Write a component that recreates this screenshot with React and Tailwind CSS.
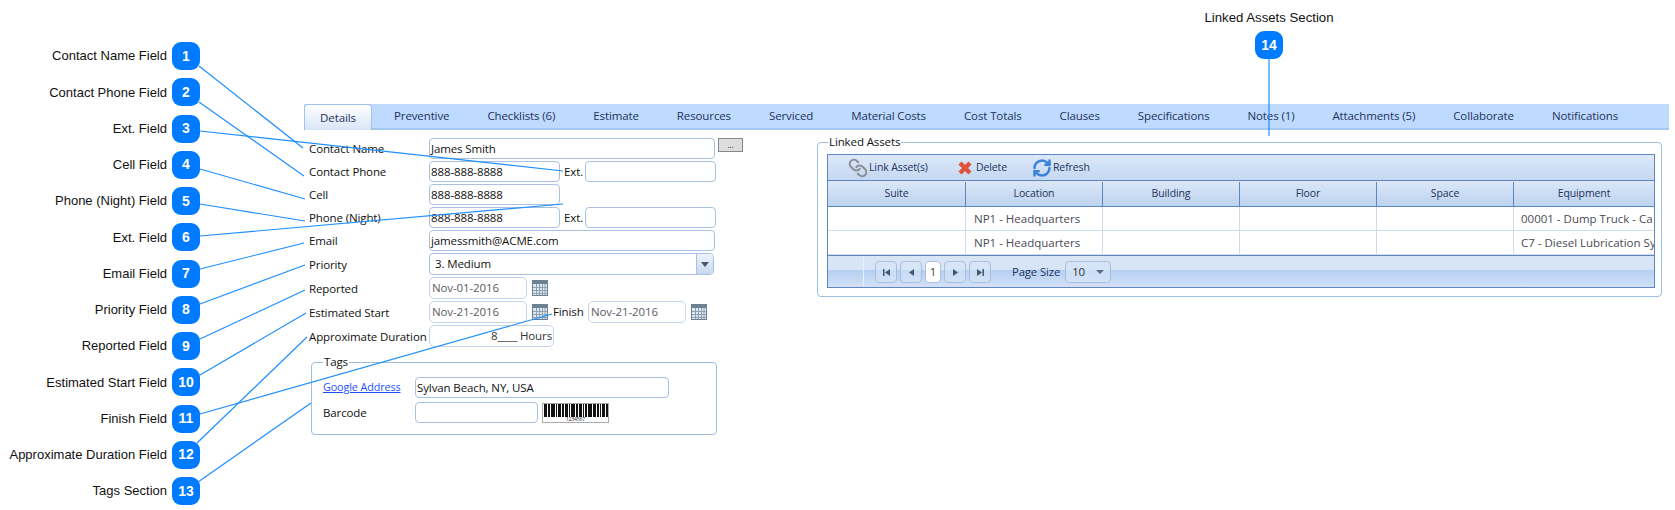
import { Link, RefreshCw } from "lucide-react";

const callouts = [
  "Contact Name Field",
  "Contact Phone Field",
  "Ext. Field",
  "Cell Field",
  "Phone (Night) Field",
  "Ext. Field",
  "Email Field",
  "Priority Field",
  "Reported Field",
  "Estimated Start Field",
  "Finish Field",
  "Approximate Duration Field",
  "Tags Section",
];

// leader lines, from the badge to the thing it points at
const lines = [
  [199, 66, 303, 148],
  [199, 102, 304, 176],
  [200, 131, 563, 171],
  [200, 169, 305, 199],
  [200, 204, 305, 221],
  [200, 236, 563, 204],
  [200, 269, 304, 243],
  [200, 304, 305, 265],
  [200, 339, 305, 290],
  [200, 375, 306, 313],
  [200, 414, 552, 314],
  [197, 443, 307, 337],
  [198, 482, 311, 403],
  [1269, 59, 1269, 136],
];

const tabs = [
  "Preventive",
  "Checklists (6)",
  "Estimate",
  "Resources",
  "Serviced",
  "Material Costs",
  "Cost Totals",
  "Clauses",
  "Specifications",
  "Notes (1)",
  "Attachments (5)",
  "Collaborate",
  "Notifications",
];

const columns = ["Suite", "Location", "Building", "Floor", "Space", "Equipment"];

const rows = ["00001 - Dump Truck - Ca", "C7 - Diesel Lubrication Sy"];

// bar, gap, bar, gap...
const bars = [3, 1, 2, 1, 4, 1, 1, 1, 3, 1, 2, 1, 3, 1, 1, 1, 4, 1, 2, 1, 3, 1, 1, 1, 2, 1, 4, 1, 3, 1, 2, 1, 1, 1, 3, 1, 2];

function Badge({ n }) {
  return (
    <div className="w-[28px] h-[28px] shrink-0 rounded-[9px] bg-[#007bff] flex items-center justify-center text-white text-[14px] font-bold font-['Liberation_Sans',sans-serif]">
      {n}
    </div>
  );
}

function Input({ className, children }) {
  return (
    <div className={`h-[21px] border border-[#a9c0e0] rounded-[4px] bg-white pl-[1px] pt-[1px] flex items-center text-[#111] whitespace-nowrap overflow-hidden ${className}`}>
      {children}
    </div>
  );
}

function Row({ label, children }) {
  return (
    <div className="flex items-center">
      <div className="w-[120px] shrink-0 pt-[1px] text-[#111] whitespace-nowrap">{label}</div>
      {children}
    </div>
  );
}

function CalendarIcon() {
  return (
    <svg width="16" height="16" viewBox="0 0 16 16" className="shrink-0">
      <rect x="0.5" y="0.5" width="15" height="15" fill="#dfe6ee" stroke="#6d8195" />
      <rect x="1" y="1" width="14" height="3" fill="#6d8195" />
      <path d="M1 7.5h14M1 10.5h14M1 13.5h14M4.5 4v11M7.5 4v11M10.5 4v11M13 4v11" stroke="#8ea1b3" strokeWidth="1" />
    </svg>
  );
}

function DateInput({ value }) {
  return (
    <div className="w-[98px] h-[22px] shrink-0 border border-[#c3d4ea] rounded-[5px] bg-white px-[2px] flex items-center text-[#5b5b66] whitespace-nowrap">
      {value}
    </div>
  );
}

function PagerButton({ d, bar }) {
  return (
    <div className="w-[22px] h-[22px] border border-[#a9bfdc] rounded-[4px] bg-[#d6e4f6]/60 flex items-center justify-center">
      <svg width="9" height="9" viewBox="0 0 9 9">
        {bar === "left" && <rect x="1" y="1" width="1.5" height="7" fill="#44566c" />}
        {bar === "right" && <rect x="6.5" y="1" width="1.5" height="7" fill="#44566c" />}
        <path d={d} fill="#44566c" />
      </svg>
    </div>
  );
}

export default function App() {
  return (
    <div className="relative w-[1675px] h-[510px] flex bg-white overflow-hidden font-['Open_Sans',sans-serif] text-[11.5px] tracking-[-0.01em]">
      {/* Left callouts */}
      <div className="w-[200px] shrink-0 pt-[42px] flex flex-col items-end gap-[8.25px] tracking-normal">
        {callouts.map((c, i) => (
          <div key={i} className="flex items-center gap-[5px]">
            <span className="text-[13px] text-[#111] whitespace-nowrap font-['Liberation_Sans',sans-serif]">{c}</span>
            <Badge n={i + 1} />
          </div>
        ))}
      </div>

      <div className="ml-[104px] w-[1365px]">
        {/* Top callout */}
        <div className="h-[104px] pt-[10px] pr-[320px] flex flex-col items-end tracking-normal">
          <div className="w-[160px] flex flex-col items-center gap-[5px]">
            <span className="text-[13.2px] leading-[16px] text-[#111] whitespace-nowrap font-['Liberation_Sans',sans-serif]">Linked Assets Section</span>
            <Badge n={14} />
          </div>
        </div>

        {/* Tabs */}
        <div className="h-[26px] bg-[#bfdaff] border-b-2 border-[#a5c8ee] flex items-stretch text-[#23335c]">
          <div className="w-[68px] h-[26px] shrink-0 border border-[#a5c3ea] border-b-0 rounded-t-[4px] bg-gradient-to-b from-white to-[#d8e5f7] flex items-center justify-center">
            Details
          </div>
          <div className="flex pl-[3px]">
            {tabs.map((t) => (
              <div key={t} className="px-[19px] flex items-center whitespace-nowrap">
                {t}
              </div>
            ))}
          </div>
        </div>

        <div className="flex">
          {/* Details form */}
          <div className="w-[513px] shrink-0 pl-[5px] pt-[8px] flex flex-col gap-[2px]">
            <Row label="Contact Name">
              <Input className="w-[286px]">James Smith</Input>
              <button className="ml-[3px] self-start w-[25px] h-[14px] border border-[#888] bg-[#ddd] text-[9px] leading-[8px] text-[#333]">...</button>
            </Row>
            <Row label="Contact Phone">
              <Input className="w-[131px]">888-888-8888</Input>
              <span className="w-[25px] pl-[4px] text-[#111]">Ext.</span>
              <Input className="w-[131px]" />
            </Row>
            <Row label="Cell">
              <Input className="w-[131px]">888-888-8888</Input>
            </Row>
            <Row label="Phone (Night)">
              <Input className="w-[131px]">888-888-8888</Input>
              <span className="w-[25px] pl-[4px] text-[#111]">Ext.</span>
              <Input className="w-[131px]" />
            </Row>
            <Row label="Email">
              <Input className="w-[286px]">jamessmith@ACME.com</Input>
            </Row>
            <Row label="Priority">
              <div className="w-[285px] h-[22px] border border-[#a9c0e0] rounded-[4px] bg-white flex items-center justify-between overflow-hidden text-[#111]">
                <span className="pl-[5px]">3. Medium</span>
                <div className="w-[17px] h-full border-l border-[#a9c0e0] bg-gradient-to-b from-[#eef3fb] to-[#c7d8ef] flex items-center justify-center">
                  <svg width="8" height="5" viewBox="0 0 8 5"><path d="M0 0h8L4 5z" fill="#44566c" /></svg>
                </div>
              </div>
            </Row>
            <Row label="Reported">
              <DateInput value="Nov-01-2016" />
              <div className="ml-[5px]"><CalendarIcon /></div>
            </Row>
            <Row label="Estimated Start">
              <DateInput value="Nov-21-2016" />
              <div className="ml-[5px]"><CalendarIcon /></div>
              <span className="ml-[5px] w-[35px] text-[#111]">Finish</span>
              <DateInput value="Nov-21-2016" />
              <div className="ml-[5px]"><CalendarIcon /></div>
            </Row>
            <Row label="Approximate Duration">
              <div className="w-[125px] h-[22px] border border-[#c3d4ea] rounded-[5px] bg-white flex items-center justify-end pr-[1px] text-[#333] whitespace-nowrap">
                8____ Hours
              </div>
            </Row>

            {/* Tags */}
            <fieldset className="mt-[5px] ml-[2px] w-[406px] border border-[#9dbfe0] rounded-[4px] pl-[11px] pt-[7px] pb-[11px]">
              <legend className="px-[1px] text-[#111] leading-[16px]">Tags</legend>
              <div className="flex items-center">
                <a className="w-[92px] text-[10.8px] text-[#1a4fff] underline whitespace-nowrap">Google Address</a>
                <Input className="w-[254px]">Sylvan Beach, NY, USA</Input>
              </div>
              <div className="mt-[4px] flex items-center">
                <span className="w-[92px] text-[#111]">Barcode</span>
                <Input className="w-[123px]" />
                <div className="ml-[4px] w-[67px] h-[20px] border border-[#aaa] bg-white flex flex-col items-center overflow-hidden">
                  <svg width="64" height="13" viewBox="0 0 64 13" className="shrink-0">
                    {bars.map((b, i) => {
                      const x = bars.slice(0, i).reduce((s, v) => s + v, 0);
                      return i % 2 === 0 ? <rect key={i} x={x} y="0" width={b} height="13" fill="#111" /> : null;
                    })}
                  </svg>
                  <span className="text-[5px] leading-[5px] text-[#222]">1234567</span>
                </div>
              </div>
            </fieldset>
          </div>

          {/* Linked assets */}
          <fieldset className="mt-[4px] w-[845px] h-[163px] border border-[#9dbfe0] rounded-[4px] pl-[9px] pr-[6px] pt-[4px]">
            <legend className="ml-[1px] px-[1px] text-[#111] leading-[16px]">Linked Assets</legend>
            <div className="h-[134px] border border-[#5e88bd] overflow-hidden text-[10.5px]">
              <div className="h-[26px] border-b border-[#5e88bd] bg-gradient-to-b from-[#dce8f8] to-[#c4d8f1] flex items-center pl-[20px] text-[#23335c]">
                <Link size={20} strokeWidth={2.5} className="text-[#8a8f96] -scale-x-100" />
                <span className="ml-[1px] w-[88px]">Link Asset(s)</span>
                <svg width="16" height="16" viewBox="0 0 16 16">
                  <path d="M3 3l10 10M13 3L3 13" stroke="#e0533d" strokeWidth="4.5" />
                </svg>
                <span className="ml-[3px] w-[58px]">Delete</span>
                <RefreshCw size={20} strokeWidth={3} className="-ml-[2px] text-[#3a82dc]" />
                <span className="ml-[1px]">Refresh</span>
              </div>

              <div className="h-[26px] pt-[1px] border-b border-[#5e88bd] bg-gradient-to-b from-[#dbe7f7] to-[#bdd3ef] grid grid-cols-[138px_137px_137px_137px_137px_1fr] text-[#23335c]">
                {columns.map((c, i) => (
                  <div key={c} className={`flex items-center justify-center ${i < 5 ? "border-r border-[#5e88bd]" : ""}`}>
                    {c}
                  </div>
                ))}
              </div>

              {rows.map((r) => (
                <div key={r} className="h-[24px] border-b border-[#cfdbea] last:border-b-0 grid grid-cols-[138px_137px_137px_137px_137px_1fr] text-[11.5px] text-[#4a4a55] tracking-normal">
                  <div className="border-r border-[#cfdbea]" />
                  <div className="border-r border-[#cfdbea] pl-[8px] pt-[1px] flex items-center whitespace-nowrap">NP1 - Headquarters</div>
                  <div className="border-r border-[#cfdbea]" />
                  <div className="border-r border-[#cfdbea]" />
                  <div className="border-r border-[#cfdbea]" />
                  <div className="pl-[7px] pt-[1px] flex items-center whitespace-nowrap overflow-hidden">{r}</div>
                </div>
              ))}

              {/* Pager */}
              <div className="h-[33px] border-t border-[#5e88bd] bg-[linear-gradient(#d7e5f7_0%,#d7e5f7_45%,#b5cff3_45%,#d4e2f6_100%)] flex items-center text-[#23335c]">
                <div className="w-[36px] h-full border-r border-[#e8f0fa]" />
                <div className="ml-[11px] flex items-center gap-[3px]">
                  <PagerButton d="M8 1v7L3 4.5z" bar="left" />
                  <PagerButton d="M7 1v7L2 4.5z" />
                  <div className="w-[16px] h-[22px] border border-[#a9bfdc] rounded-[4px] bg-white flex items-center justify-center text-[#444] text-[11.5px]">1</div>
                  <PagerButton d="M2 1v7l5-3.5z" />
                  <PagerButton d="M1 1v7l5-3.5z" bar="right" />
                </div>
                <span className="ml-[21px] text-[11.3px] whitespace-nowrap">Page Size</span>
                <div className="ml-[5px] w-[46px] h-[22px] border border-[#a9bfdc] rounded-[4px] bg-[#d6e4f6]/70 flex items-center justify-between px-[6px] text-[#333] text-[11.5px]">
                  <span>10</span>
                  <svg width="8" height="4" viewBox="0 0 8 4"><path d="M0 0h8L4 4z" fill="#5a6c82" /></svg>
                </div>
              </div>
            </div>
          </fieldset>
        </div>
      </div>

      {/* Leader lines sit over everything */}
      <svg className="absolute inset-0 pointer-events-none" width="1675" height="510">
        {lines.map(([x1, y1, x2, y2], i) => (
          <line key={i} x1={x1} y1={y1} x2={x2} y2={y2} stroke="#1e8fff" strokeWidth="1.2" />
        ))}
      </svg>
    </div>
  );
}
